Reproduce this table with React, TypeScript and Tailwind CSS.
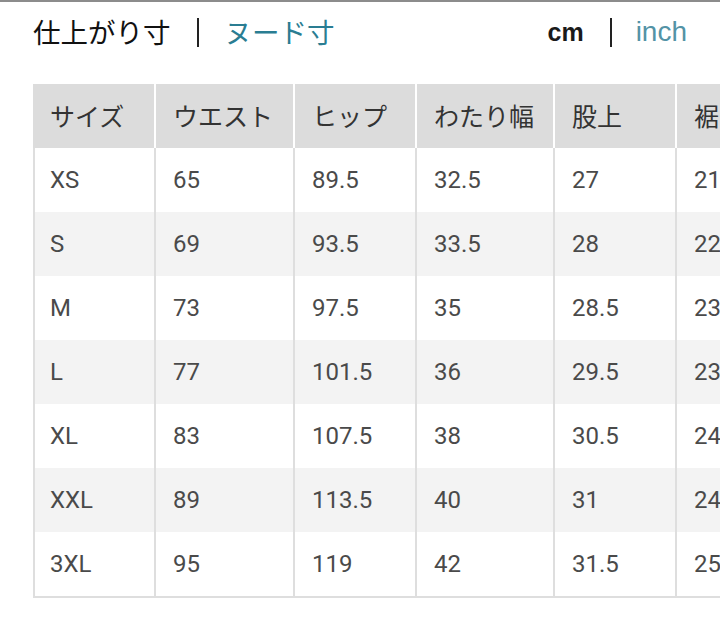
const headers = ["サイズ", "ウエスト", "ヒップ", "わたり幅", "股上", "裾"];

const rows = [
  ["XS", "65", "89.5", "32.5", "27", "21"],
  ["S", "69", "93.5", "33.5", "28", "22"],
  ["M", "73", "97.5", "35", "28.5", "23"],
  ["L", "77", "101.5", "36", "29.5", "23"],
  ["XL", "83", "107.5", "38", "30.5", "24"],
  ["XXL", "89", "113.5", "40", "31", "24"],
  ["3XL", "95", "119", "42", "31.5", "25"],
];

const cols = "grid grid-cols-[121px_139px_122px_138px_122px_122px]";

export default function App() {
  return (
    <div
      className="w-[720px] h-[637px] overflow-hidden bg-white border-t-2 border-[#8c8c8c]"
      style={{ fontFamily: "Roboto, 'Noto Sans CJK JP', sans-serif" }}
    >
      {/* tabs */}
      <div className="flex items-center h-[60px] pl-[33px] pr-[33px]">
        <div
          className="flex items-center text-[27.5px] leading-none"
          style={{ fontFamily: "'Noto Sans CJK JP', sans-serif" }}
        >
          <span className="text-[#111]">仕上がり寸</span>
          <span className="mx-[26px] w-[2px] h-[29px] bg-[#222]" />
          <span className="text-[#2a7d92]">ヌード寸</span>
        </div>
        <div
          className="ml-auto flex items-center leading-none"
          style={{ fontFamily: "'Liberation Sans', Arial, sans-serif" }}
        >
          <span className="font-bold text-[25px] text-[#1a1a1a]">cm</span>
          <span className="ml-[26px] mr-[24px] w-[2px] h-[29px] bg-[#222]" />
          <span className="text-[28px] text-[#5393a6]">inch</span>
        </div>
      </div>

      {/* table */}
      <div className="mt-[22px] ml-[33px] w-[764px]">
        <div className={`${cols} h-[64px] bg-[#dcdcdc]`}>
          {headers.map((h, i) => (
            <div
              key={h}
              className={`flex items-center pl-[17px] text-[25px] text-[#333] ${i > 0 ? "border-l-2 border-white" : ""}`}
              style={{ fontFamily: "'Noto Sans CJK JP', sans-serif" }}
            >
              {h}
            </div>
          ))}
        </div>
        <div className="border-b-2 border-[#dedede]">
          {rows.map((r, ri) => (
            <div
              key={r[0]}
              className={`${cols} h-[64px] ${ri % 2 === 1 ? "bg-[#f3f3f3]" : "bg-white"}`}
            >
              {r.map((c, ci) => (
                <div
                  key={ci}
                  className={`flex items-center text-[24px] text-[#4a4a4a] border-l-2 border-[#dedede] ${ci === 0 ? "pl-[15px]" : "pl-[17px]"}`}
                >
                  {c}
                </div>
              ))}
            </div>
          ))}
        </div>
      </div>
    </div>
  );
}
